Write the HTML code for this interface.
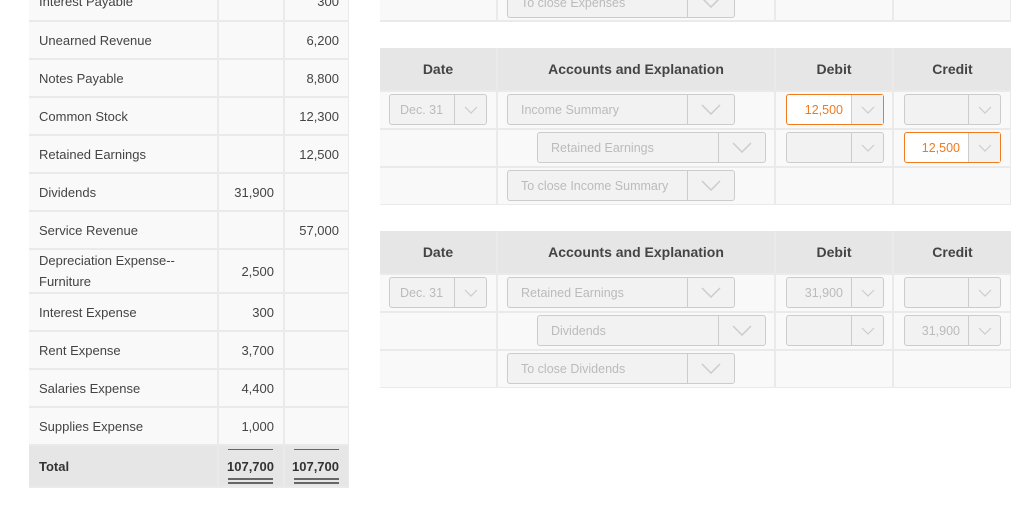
<!DOCTYPE html>
<html><head><meta charset="utf-8"><style>
*{box-sizing:border-box;margin:0;padding:0}
body{width:1024px;height:507px;background:#fff;position:relative;overflow:hidden;font-family:"Liberation Sans",sans-serif;}
.c{position:absolute;background:#f9f9f9;color:#444;font-size:13px;display:flex;align-items:center;}
.l{padding-left:10px;line-height:21px}
.r{justify-content:flex-end;padding-right:9px}
.t{background:#e6e6e6;font-weight:bold;color:#333}
.bg{position:absolute;background:#eaeaea}
.h{position:absolute;background:#e6e6e6;font-size:14px;font-weight:bold;color:#444;display:flex;align-items:center;justify-content:center}
.rc{position:absolute;background:#f9f9f9}
.dd{position:absolute;height:31px;border:1.5px solid #ccc;border-radius:3px;background:#f2f2f2;color:#bbb;font-size:12.5px;display:flex;align-items:center}
.dd .tx{flex:1;padding-left:13px;white-space:nowrap;overflow:hidden}
.dd .ar{height:100%;border-left:1.5px solid #ccc;display:flex;align-items:center;justify-content:center}
.o{border-color:#f07a1e;background:#fff;color:#f07a1e}
.o .tx{text-align:right;padding-right:8px;padding-left:0}
.o .ar{background:#f2f2f2}
.ul{position:absolute;height:1px;background:#666}
.ul2{position:absolute;height:2px;background:#666}
</style></head><body>
<div class="bg" style="left:29px;top:0;width:320px;height:488px"></div>
<div class="c l" style="left:29px;top:-17px;width:188px;height:37px">Interest Payable</div><div class="c" style="left:219px;top:-17px;width:64px;height:37px"></div><div class="c r" style="left:285px;top:-17px;width:63px;height:37px">300</div>
<div class="c l" style="left:29px;top:22px;width:188px;height:36px">Unearned Revenue</div><div class="c" style="left:219px;top:22px;width:64px;height:36px"></div><div class="c r" style="left:285px;top:22px;width:63px;height:36px">6,200</div>
<div class="c l" style="left:29px;top:60px;width:188px;height:36px">Notes Payable</div><div class="c" style="left:219px;top:60px;width:64px;height:36px"></div><div class="c r" style="left:285px;top:60px;width:63px;height:36px">8,800</div>
<div class="c l" style="left:29px;top:98px;width:188px;height:36px">Common Stock</div><div class="c" style="left:219px;top:98px;width:64px;height:36px"></div><div class="c r" style="left:285px;top:98px;width:63px;height:36px">12,300</div>
<div class="c l" style="left:29px;top:136px;width:188px;height:36px">Retained Earnings</div><div class="c" style="left:219px;top:136px;width:64px;height:36px"></div><div class="c r" style="left:285px;top:136px;width:63px;height:36px">12,500</div>
<div class="c l" style="left:29px;top:174px;width:188px;height:36px">Dividends</div><div class="c r" style="left:219px;top:174px;width:64px;height:36px">31,900</div><div class="c" style="left:285px;top:174px;width:63px;height:36px"></div>
<div class="c l" style="left:29px;top:212px;width:188px;height:36px">Service Revenue</div><div class="c" style="left:219px;top:212px;width:64px;height:36px"></div><div class="c r" style="left:285px;top:212px;width:63px;height:36px">57,000</div>
<div class="c l" style="left:29px;top:250px;width:188px;height:42px">Depreciation Expense--<br>Furniture</div><div class="c r" style="left:219px;top:250px;width:64px;height:42px">2,500</div><div class="c" style="left:285px;top:250px;width:63px;height:42px"></div>
<div class="c l" style="left:29px;top:294px;width:188px;height:36px">Interest Expense</div><div class="c r" style="left:219px;top:294px;width:64px;height:36px">300</div><div class="c" style="left:285px;top:294px;width:63px;height:36px"></div>
<div class="c l" style="left:29px;top:332px;width:188px;height:36px">Rent Expense</div><div class="c r" style="left:219px;top:332px;width:64px;height:36px">3,700</div><div class="c" style="left:285px;top:332px;width:63px;height:36px"></div>
<div class="c l" style="left:29px;top:370px;width:188px;height:36px">Salaries Expense</div><div class="c r" style="left:219px;top:370px;width:64px;height:36px">4,400</div><div class="c" style="left:285px;top:370px;width:63px;height:36px"></div>
<div class="c l" style="left:29px;top:408px;width:188px;height:36px">Supplies Expense</div><div class="c r" style="left:219px;top:408px;width:64px;height:36px">1,000</div><div class="c" style="left:285px;top:408px;width:63px;height:36px"></div>
<div class="c l t" style="left:29px;top:446px;width:188px;height:40px">Total</div><div class="c r t" style="left:219px;top:446px;width:64px;height:40px">107,700</div><div class="c r t" style="left:285px;top:446px;width:63px;height:40px">107,700</div>
<div class="ul" style="left:228px;top:449px;width:45px"></div><div class="ul" style="left:294px;top:449px;width:45px"></div>
<div class="ul2" style="left:228px;top:478px;width:45px"></div><div class="ul2" style="left:228px;top:482px;width:45px"></div>
<div class="ul2" style="left:294px;top:478px;width:45px"></div><div class="ul2" style="left:294px;top:482px;width:45px"></div>

<div class="bg" style="left:380px;top:0;width:631px;height:22px"></div>
<div class="rc" style="left:380px;top:0;width:116px;height:20px"></div><div class="rc" style="left:498px;top:0;width:276px;height:20px"></div><div class="rc" style="left:776px;top:0;width:116px;height:20px"></div><div class="rc" style="left:894px;top:0;width:116px;height:20px"></div>
<div class="dd" style="left:507px;top:-13px;width:228px"><div class="tx">To close Expenses</div><div class="ar" style="width:47px"><svg width="20" height="11"><path d="M1 1L10 10L19 1" fill="none" stroke="#ccc" stroke-width="1.5"/></svg></div></div>

<div class="bg" style="left:380px;top:48px;width:631px;height:157px"></div>
<div class="h" style="left:380px;top:48px;width:116px;height:42px">Date</div><div class="h" style="left:498px;top:48px;width:276px;height:42px">Accounts and Explanation</div><div class="h" style="left:776px;top:48px;width:116px;height:42px">Debit</div><div class="h" style="left:894px;top:48px;width:117px;height:42px">Credit</div>
<div class="rc" style="left:380px;top:92px;width:116px;height:36px"></div><div class="rc" style="left:498px;top:92px;width:276px;height:36px"></div><div class="rc" style="left:776px;top:92px;width:116px;height:36px"></div><div class="rc" style="left:894px;top:92px;width:116px;height:36px"></div>
<div class="rc" style="left:380px;top:130px;width:116px;height:36px"></div><div class="rc" style="left:498px;top:130px;width:276px;height:36px"></div><div class="rc" style="left:776px;top:130px;width:116px;height:36px"></div><div class="rc" style="left:894px;top:130px;width:116px;height:36px"></div>
<div class="rc" style="left:380px;top:168px;width:116px;height:36px"></div><div class="rc" style="left:498px;top:168px;width:276px;height:36px"></div><div class="rc" style="left:776px;top:168px;width:116px;height:36px"></div><div class="rc" style="left:894px;top:168px;width:116px;height:36px"></div>

<div class="dd" style="left:389px;top:94px;width:98px"><div class="tx" style="padding-left:10px">Dec. 31</div><div class="ar" style="width:32px"><svg width="14" height="8"><path d="M1 1L7 7L13 1" fill="none" stroke="#ccc" stroke-width="1.2"/></svg></div></div>
<div class="dd" style="left:507px;top:94px;width:228px"><div class="tx">Income Summary</div><div class="ar" style="width:47px"><svg width="20" height="11"><path d="M1 1L10 10L19 1" fill="none" stroke="#ccc" stroke-width="1.5"/></svg></div></div>
<div class="dd o" style="left:786px;top:94px;width:98px"><div class="tx">12,500</div><div class="ar" style="width:32px"><svg width="14" height="8"><path d="M1 1L7 7L13 1" fill="none" stroke="#ccc" stroke-width="1.2"/></svg></div></div>
<div class="dd" style="left:904px;top:94px;width:97px"><div class="tx"></div><div class="ar" style="width:32px"><svg width="14" height="8"><path d="M1 1L7 7L13 1" fill="none" stroke="#ccc" stroke-width="1.2"/></svg></div></div>

<div class="dd" style="left:537px;top:132px;width:229px"><div class="tx">Retained Earnings</div><div class="ar" style="width:47px"><svg width="20" height="11"><path d="M1 1L10 10L19 1" fill="none" stroke="#ccc" stroke-width="1.5"/></svg></div></div>
<div class="dd" style="left:786px;top:132px;width:98px"><div class="tx"></div><div class="ar" style="width:32px"><svg width="14" height="8"><path d="M1 1L7 7L13 1" fill="none" stroke="#ccc" stroke-width="1.2"/></svg></div></div>
<div class="dd o" style="left:904px;top:132px;width:97px"><div class="tx">12,500</div><div class="ar" style="width:32px"><svg width="14" height="8"><path d="M1 1L7 7L13 1" fill="none" stroke="#ccc" stroke-width="1.2"/></svg></div></div>

<div class="dd" style="left:507px;top:170px;width:228px"><div class="tx">To close Income Summary</div><div class="ar" style="width:47px"><svg width="20" height="11"><path d="M1 1L10 10L19 1" fill="none" stroke="#ccc" stroke-width="1.5"/></svg></div></div>

<div class="bg" style="left:380px;top:231px;width:631px;height:157px"></div>
<div class="h" style="left:380px;top:231px;width:116px;height:42px">Date</div><div class="h" style="left:498px;top:231px;width:276px;height:42px">Accounts and Explanation</div><div class="h" style="left:776px;top:231px;width:116px;height:42px">Debit</div><div class="h" style="left:894px;top:231px;width:117px;height:42px">Credit</div>
<div class="rc" style="left:380px;top:275px;width:116px;height:36px"></div><div class="rc" style="left:498px;top:275px;width:276px;height:36px"></div><div class="rc" style="left:776px;top:275px;width:116px;height:36px"></div><div class="rc" style="left:894px;top:275px;width:116px;height:36px"></div>
<div class="rc" style="left:380px;top:313px;width:116px;height:36px"></div><div class="rc" style="left:498px;top:313px;width:276px;height:36px"></div><div class="rc" style="left:776px;top:313px;width:116px;height:36px"></div><div class="rc" style="left:894px;top:313px;width:116px;height:36px"></div>
<div class="rc" style="left:380px;top:351px;width:116px;height:36px"></div><div class="rc" style="left:498px;top:351px;width:276px;height:36px"></div><div class="rc" style="left:776px;top:351px;width:116px;height:36px"></div><div class="rc" style="left:894px;top:351px;width:116px;height:36px"></div>

<div class="dd" style="left:389px;top:277px;width:98px"><div class="tx" style="padding-left:10px">Dec. 31</div><div class="ar" style="width:32px"><svg width="14" height="8"><path d="M1 1L7 7L13 1" fill="none" stroke="#ccc" stroke-width="1.2"/></svg></div></div>
<div class="dd" style="left:507px;top:277px;width:228px"><div class="tx">Retained Earnings</div><div class="ar" style="width:47px"><svg width="20" height="11"><path d="M1 1L10 10L19 1" fill="none" stroke="#ccc" stroke-width="1.5"/></svg></div></div>
<div class="dd" style="left:786px;top:277px;width:98px"><div class="tx" style="text-align:right;padding-right:8px">31,900</div><div class="ar" style="width:32px"><svg width="14" height="8"><path d="M1 1L7 7L13 1" fill="none" stroke="#ccc" stroke-width="1.2"/></svg></div></div>
<div class="dd" style="left:904px;top:277px;width:97px"><div class="tx"></div><div class="ar" style="width:32px"><svg width="14" height="8"><path d="M1 1L7 7L13 1" fill="none" stroke="#ccc" stroke-width="1.2"/></svg></div></div>

<div class="dd" style="left:537px;top:315px;width:229px"><div class="tx">Dividends</div><div class="ar" style="width:47px"><svg width="20" height="11"><path d="M1 1L10 10L19 1" fill="none" stroke="#ccc" stroke-width="1.5"/></svg></div></div>
<div class="dd" style="left:786px;top:315px;width:98px"><div class="tx"></div><div class="ar" style="width:32px"><svg width="14" height="8"><path d="M1 1L7 7L13 1" fill="none" stroke="#ccc" stroke-width="1.2"/></svg></div></div>
<div class="dd" style="left:904px;top:315px;width:97px"><div class="tx" style="text-align:right;padding-right:8px">31,900</div><div class="ar" style="width:32px"><svg width="14" height="8"><path d="M1 1L7 7L13 1" fill="none" stroke="#ccc" stroke-width="1.2"/></svg></div></div>

<div class="dd" style="left:507px;top:353px;width:228px"><div class="tx">To close Dividends</div><div class="ar" style="width:47px"><svg width="20" height="11"><path d="M1 1L10 10L19 1" fill="none" stroke="#ccc" stroke-width="1.5"/></svg></div></div>
</body></html>
